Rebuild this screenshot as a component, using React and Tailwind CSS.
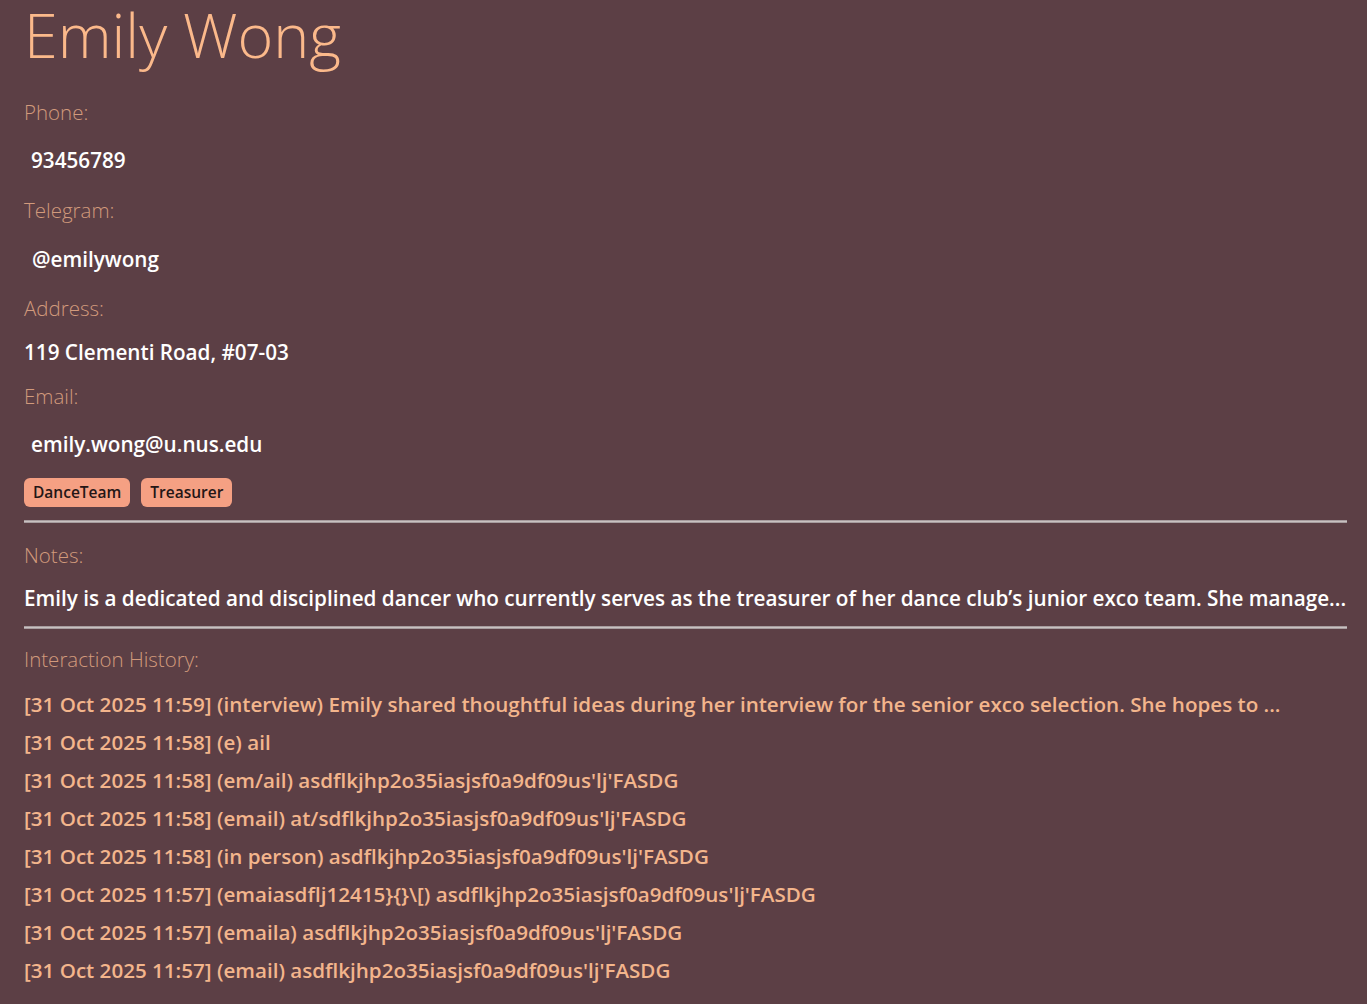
import React from 'react';

const history = [
  "[31 Oct 2025 11:59] (interview) Emily shared thoughtful ideas during her interview for the senior exco selection. She hopes to ...",
  "[31 Oct 2025 11:58] (e) ail",
  "[31 Oct 2025 11:58] (em/ail) asdflkjhp2o35iasjsf0a9df09us'lj'FASDG",
  "[31 Oct 2025 11:58] (email) at/sdflkjhp2o35iasjsf0a9df09us'lj'FASDG",
  "[31 Oct 2025 11:58] (in person) asdflkjhp2o35iasjsf0a9df09us'lj'FASDG",
  "[31 Oct 2025 11:57] (emaiasdflj12415}{}\\[) asdflkjhp2o35iasjsf0a9df09us'lj'FASDG",
  "[31 Oct 2025 11:57] (emaila) asdflkjhp2o35iasjsf0a9df09us'lj'FASDG",
  "[31 Oct 2025 11:57] (email) asdflkjhp2o35iasjsf0a9df09us'lj'FASDG",
];

function Label({ children, className = '' }) {
  return (
    <div className={`h-[30px] leading-[30px] text-[20.5px] font-light text-[#d29a7c] ${className}`}>
      {children}
    </div>
  );
}

function Value({ children, className = '' }) {
  return (
    <div className={`h-[30px] leading-[29px] text-[20.7px] font-semibold text-white whitespace-nowrap ${className}`}>
      {children}
    </div>
  );
}

function Divider({ className = '' }) {
  return <div className={`h-[3px] bg-[#c9c1c1] border-y border-[#a79c9e] ${className}`} />;
}

export default function App() {
  return (
    <div
      className="min-h-screen bg-[#5c3f45] px-[24px] pr-[20px] pt-px"
      style={{ fontFamily: '"Open Sans", "Noto Sans", sans-serif' }}
    >
      <div className="-mt-[8px] h-[84px] leading-[84px] text-[61px] font-light text-[#fbb98b] whitespace-nowrap">
        Emily Wong
      </div>

      <Label className="mt-[20px]">Phone:</Label>
      <Value className="mt-[19px] pl-[7px]">93456789</Value>

      <Label className="mt-[19px]">Telegram:</Label>
      <Value className="mt-[20px] pl-[8px]">@emilywong</Value>

      <Label className="mt-[18px]">Address:</Label>
      <Value className="mt-[15px]">119 Clementi Road, #07-03</Value>

      <Label className="mt-[13px]">Email:</Label>
      <Value className="mt-[19px] pl-[7px]">emily.wong@u.nus.edu</Value>

      <div className="mt-[18px] flex gap-[11px]">
        {['DanceTeam', 'Treasurer'].map((t) => (
          <span
            key={t}
            className="h-[29px] leading-[29px] px-[9px] rounded-[6px] bg-[#f5a083] text-[#241616] text-[15.5px] font-semibold"
          >
            {t}
          </span>
        ))}
      </div>

      <Divider className="mt-[13px]" />

      <Label className="mt-[17px]">Notes:</Label>
      <Value className="mt-[14px] overflow-hidden">
        Emily is a dedicated and disciplined dancer who currently serves as the treasurer of her dance club’s junior exco team. She manage...
      </Value>

      <Divider className="mt-[12px]" />

      <Label className="mt-[15px]">Interaction History:</Label>

      <div className="mt-[11px] pb-[8px]">
        {history.map((h, i) => (
          <div
            key={i}
            className="h-[38px] leading-[38px] text-[20.6px] font-semibold text-[#f3b58c] whitespace-nowrap"
          >
            {h}
          </div>
        ))}
      </div>
    </div>
  );
}
